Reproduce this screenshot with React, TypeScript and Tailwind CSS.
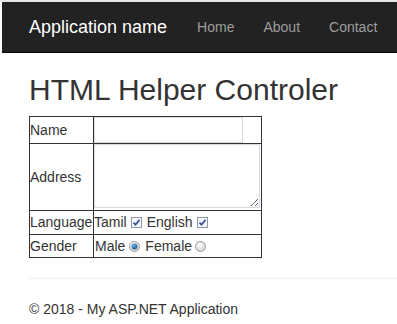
import React from "react";

const CheckBox: React.FC = () => (
  <svg width="11" height="11" viewBox="0 0 11 11" className="block">
    <rect x="0.5" y="0.5" width="10" height="10" fill="#f4f6fa" stroke="#8e99a8" />
    <path d="M2.5 5.6 L4.5 7.7 L8.5 2.9" fill="none" stroke="#3552a0" strokeWidth="1.7" />
  </svg>
);

const Radio: React.FC<{ checked?: boolean }> = ({ checked }) => (
  <svg width="11" height="11" viewBox="0 0 11 11" className="block">
    <defs>
      <radialGradient id="rg-off" cx="40%" cy="35%" r="70%">
        <stop offset="0%" stopColor="#ffffff" />
        <stop offset="100%" stopColor="#d0d0d0" />
      </radialGradient>
      <radialGradient id="rg-on" cx="40%" cy="35%" r="70%">
        <stop offset="0%" stopColor="#6bb6ef" />
        <stop offset="100%" stopColor="#0b4f86" />
      </radialGradient>
    </defs>
    <circle cx="5.5" cy="5.5" r="5" fill="url(#rg-off)" stroke="#9a9a9a" />
    {checked && <circle cx="5.5" cy="5.5" r="2.9" fill="url(#rg-on)" />}
  </svg>
);

export default function App() {
  const cell = "border border-[#333] p-0 align-middle";

  return (
    <div className="min-h-[324px] bg-white font-['Liberation_Sans',Arial,sans-serif] text-[14px] text-[#333] border-t-2 border-[#e6e6e6]">
      {/* Navbar */}
      <nav className="h-[51px] bg-[#222] border-b border-[#080808] ml-[2px] flex items-center">
        <span className="pl-[27px] pr-[15px] text-[18px] leading-[20px] text-white">
          Application name
        </span>
        <ul className="flex">
          <li className="px-[15px] leading-[20px] text-[#9d9d9d]">Home</li>
          <li className="pl-[14px] pr-[15px] leading-[20px] text-[#9d9d9d]">About</li>
          <li className="pl-[14px] pr-[15px] leading-[20px] text-[#9d9d9d]">Contact</li>
        </ul>
      </nav>

      {/* Body */}
      <main className="pl-[29px]">
        <h1 className="mt-[20px] mb-[10px] text-[30px] leading-[33px] font-normal">
          HTML Helper Controler
        </h1>

        <table className="w-[233px] border border-[#333]">
          <tbody>
            <tr>
              <td className={`${cell} w-[64px]`}>Name</td>
              <td className={cell}>
                <input
                  type="text"
                  className="block w-[149px] h-[26px] border border-[#d5dce6] bg-white outline-none"
                />
              </td>
            </tr>
            <tr>
              <td className={cell}>Address</td>
              <td className={`${cell} pb-[2px]`}>
                <textarea className="block w-[166px] h-[64px] border border-[#d5dce6] bg-white outline-none resize" />
              </td>
            </tr>
            <tr>
              <td className={`${cell} h-[24px]`}>Language</td>
              <td className={cell}>
                <div className="flex items-center">
                  <span>Tamil</span>
                  <span className="ml-[4px]">
                    <CheckBox />
                  </span>
                  <span className="ml-[5px]">English</span>
                  <span className="ml-[4px]">
                    <CheckBox />
                  </span>
                </div>
              </td>
            </tr>
            <tr>
              <td className={`${cell} h-[23px]`}>Gender</td>
              <td className={cell}>
                <div className="flex items-center pl-px">
                  <span>Male</span>
                  <span className="ml-[4px]">
                    <Radio checked />
                  </span>
                  <span className="ml-[5px]">Female</span>
                  <span className="ml-[3px]">
                    <Radio />
                  </span>
                </div>
              </td>
            </tr>
          </tbody>
        </table>

        <hr className="mt-[20px] mb-[20px] border-t border-[#eee]" />

        <footer>
          <p className="leading-[20px]">© 2018 - My ASP.NET Application</p>
        </footer>
      </main>
    </div>
  );
}
